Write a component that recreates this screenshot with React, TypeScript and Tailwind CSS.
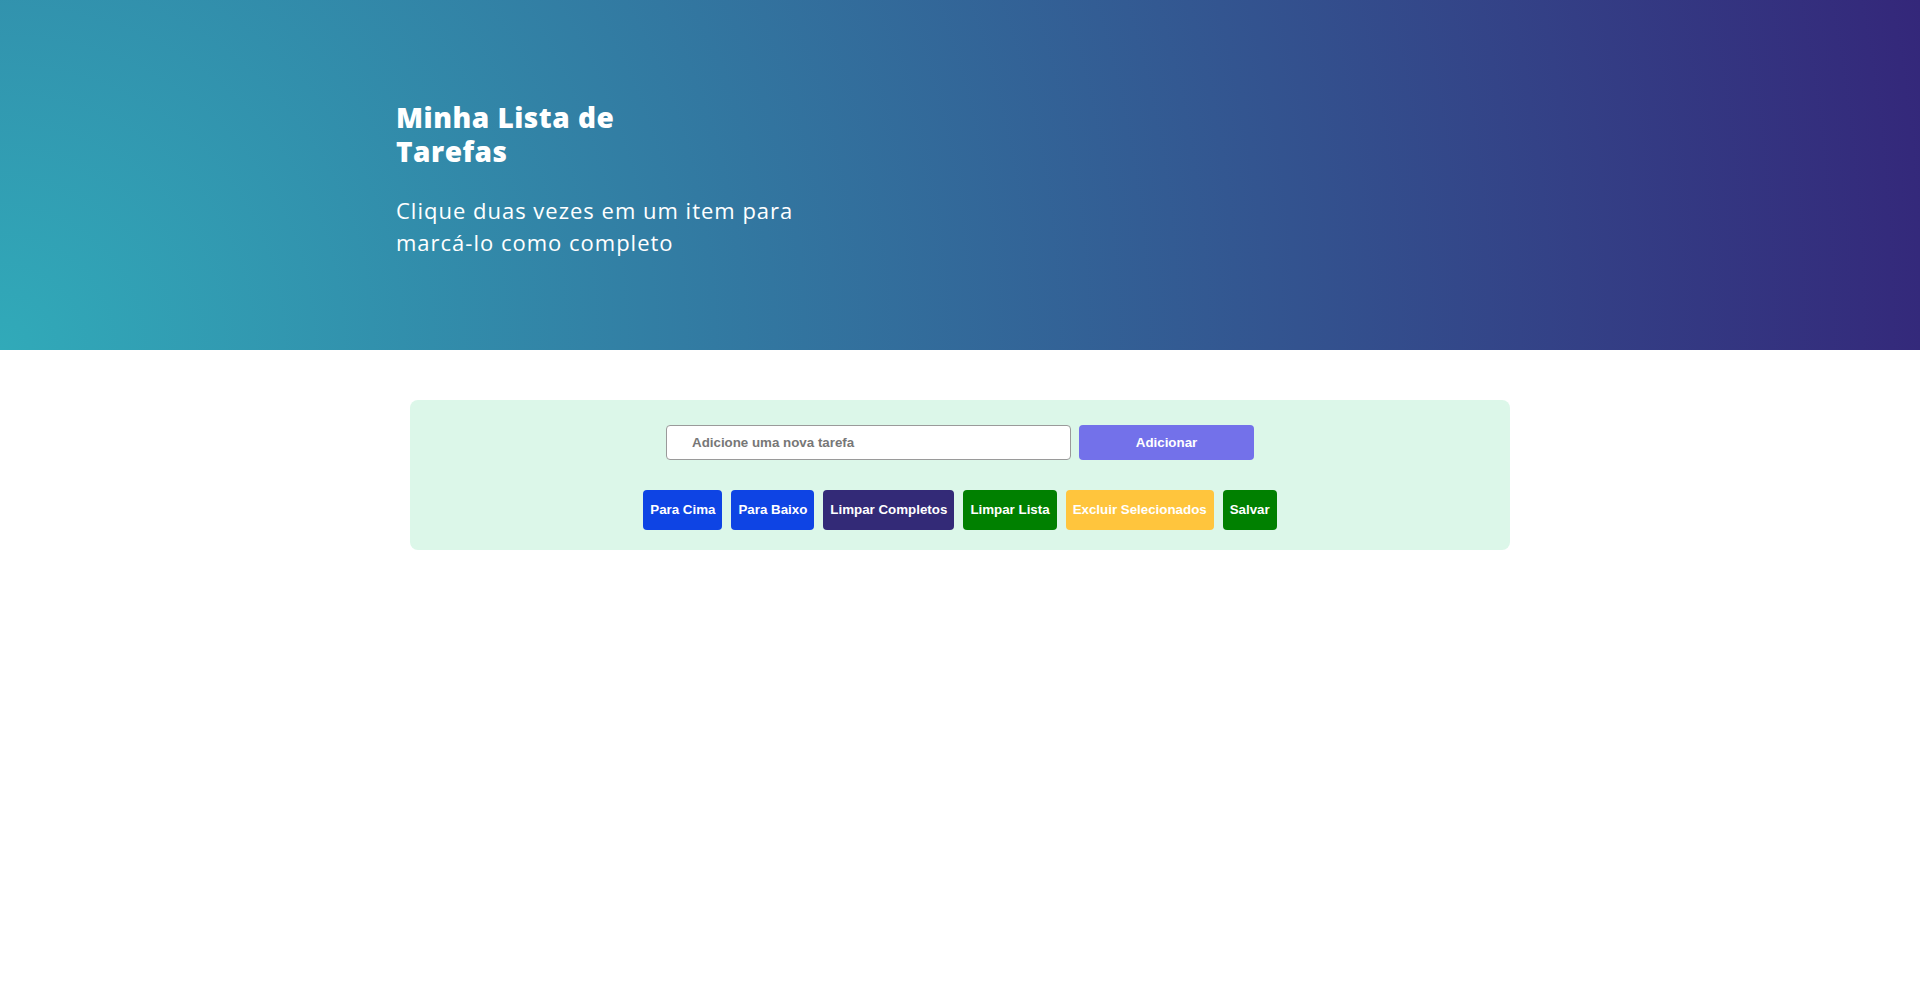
import React from "react";

const btn =
  "h-[40px] px-[7px] rounded-[4px] text-white font-bold text-[13.333px] leading-none [font-family:'Liberation_Sans',Arial,sans-serif]";

export default function App() {
  return (
    <div className="min-h-[994px] bg-white [font-family:'Liberation_Sans',Arial,sans-serif]">
      <header className="h-[350px] bg-[radial-gradient(circle_at_bottom_left,#31aab9,#34277a)] pt-[100px] pl-[396px]">
        <h1 className="w-[260px] text-white font-extrabold text-[28px] leading-[34px] tracking-[0.5px] [font-family:'Open_Sans',sans-serif]">
          Minha Lista de Tarefas
        </h1>
        <p className="mt-[26px] w-[430px] text-white font-normal text-[22px] leading-[32px] tracking-[1px] [font-family:'Open_Sans',sans-serif]">
          Clique duas vezes em um item para marcá-lo como completo
        </p>
      </header>

      <main className="flex justify-center pt-[50px]">
        <div className="w-[1100px] rounded-[8px] bg-[#dcf7e9] pt-[25px] pb-[20px] flex flex-col items-center">
          <div className="flex items-center gap-[8px]">
            <input
              type="text"
              placeholder="Adicione uma nova tarefa"
              className="w-[405px] h-[35px] rounded-[4px] border border-[#9a9a9a] bg-white pl-[25px] pr-[10px] text-[13.333px] font-bold text-[#444] placeholder:text-[#777] outline-none [font-family:'Liberation_Sans',Arial,sans-serif]"
            />
            <button className="w-[175px] h-[35px] rounded-[4px] bg-[#7371ea] text-white font-bold text-[13.333px] [font-family:'Liberation_Sans',Arial,sans-serif]">
              Adicionar
            </button>
          </div>
          <div className="mt-[30px] flex items-center gap-[9px]">
            <button className={`${btn} bg-[#0e44e4]`}>Para Cima</button>
            <button className={`${btn} bg-[#0e44e4]`}>Para Baixo</button>
            <button className={`${btn} bg-[#332a77]`}>Limpar Completos</button>
            <button className={`${btn} bg-[#008000]`}>Limpar Lista</button>
            <button className={`${btn} bg-[#ffc53d]`}>Excluir Selecionados</button>
            <button className={`${btn} bg-[#008000]`}>Salvar</button>
          </div>
        </div>
      </main>
    </div>
  );
}
